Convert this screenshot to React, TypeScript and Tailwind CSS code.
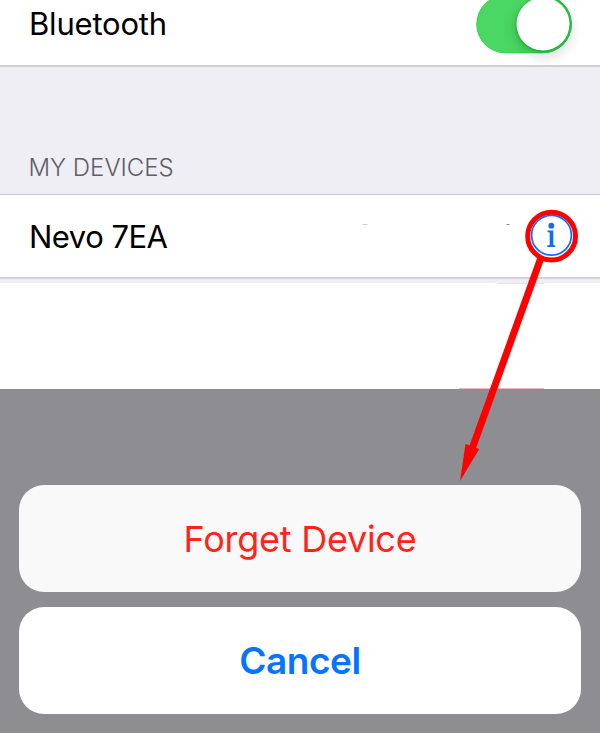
function Toggle() {
  return (
    <svg className="absolute right-0 top-0 h-[65px] w-[150px]" viewBox="450 0 150 65">
      <defs>
        <filter id="soft" x="-50%" y="-50%" width="200%" height="200%">
          <feGaussianBlur stdDeviation="6" />
        </filter>
        <filter id="edge" x="-50%" y="-50%" width="200%" height="200%">
          <feGaussianBlur stdDeviation="1" />
        </filter>
      </defs>
      <circle cx="545" cy="31" r="27" fill="#000" opacity="0.12" filter="url(#soft)" />
      <rect x="476.3" y="-5" width="95.500" height="58.300" rx="29.150" fill="#4bd763" />
      <clipPath id="track">
        <rect x="476.3" y="-5" width="95.500" height="58.300" rx="29.150" />
      </clipPath>
      <g clipPath="url(#track)">
        <rect x="476.8" y="-4.500" width="94.500" height="57.300" rx="28.650" fill="none" stroke="#38d553" strokeWidth="1" />
        <circle cx="541" cy="29" r="27" fill="#006010" opacity="0.22" filter="url(#soft)" />
        <circle cx="543.2" cy="24.800" r="27.300" fill="#0d9a2a" opacity="0.7" filter="url(#edge)" />
        <path d="M543 -4A28.200 28.200 0 0 1 543 52.500" fill="none" stroke="#1fc040" strokeWidth="2.200" />
      </g>
      <circle cx="543" cy="24" r="26.500" fill="#fff" />
    </svg>
  );
}

function Annotation() {
  return (
    <svg className="pointer-events-none absolute inset-0 h-[733px] w-[600px]" viewBox="0 0 600 733">
      <path d="M497 283.5H544" stroke="#f4dce3" strokeWidth="1" />
      <path d="M459 388.5H544" stroke="#f5b5b5" strokeWidth="1" />
      <path d="M362.5 224.5H367.5" stroke="#ccc" strokeWidth="1" />
      <path d="M506.5 224.5H509.5" stroke="#888" strokeWidth="1" />
      <path d="M540.5 259L472 449" stroke="#fe0000" strokeWidth="7" />
      <path d="M465.5 444L479.2 449L460 481Z" fill="#fe0000" />
      <circle cx="551.6" cy="236.2" r="23.9" fill="#fff" stroke="#fe0000" strokeWidth="5" />
      <circle cx="551.5" cy="235.3" r="19.900" fill="none" stroke="#0a6cff" strokeWidth="1.700" />
      <circle cx="551.3" cy="225.700" r="2.900" fill="#0a6cff" />
      <path d="M547.5 230.500H553.300V245L555.300 245.600V247H547.200V245.600L549.700 245V232.600L547.500 232.100Z" fill="#0a6cff" />
    </svg>
  );
}

export default function App() {
  return (
    <main className="relative flex h-[733px] w-[600px] flex-col overflow-hidden bg-white font-['Inter',sans-serif] text-black">
      <section className="relative h-[65px] shrink-0 pl-[29px]">
        <div className="pt-[4px] text-[31px] leading-[40px] tracking-[-0.2px]">Bluetooth</div>
        <Toggle />
      </section>
      <header className="flex h-[130px] shrink-0 items-end border-b border-t-2 border-b-[#c8c7cc] border-t-[#d0cfd4] bg-[#efeef5] pb-[11px] pl-[28.5px] text-[24px] font-light leading-[30px] text-[#5f5f65]">
        MY DEVICES
      </header>
      <section className="h-[88px] shrink-0 border-b-4 border-[#efeef5]">
        <div className="h-[84px] border-b-2 border-[#d2d2d8] pl-[29px] pt-[22px] text-[31px] leading-[40px] tracking-[-0.5px]">Nevo 7EA</div>
      </section>
      <div className="h-[106px] shrink-0" />
      <section className="flex h-[344px] shrink-0 flex-col gap-[15px] bg-[#8e8d92] px-[19px] pt-[96px]">
        <button className="flex h-[107px] w-full items-center justify-center rounded-[25px] bg-[#f9f9f9] pt-px text-[36px] tracking-[-0.25px] text-[#ff2419]">
          Forget Device
        </button>
        <button className="flex h-[107px] w-full items-center justify-center rounded-[25px] bg-white text-[37px] font-semibold tracking-[-0.5px] text-[#0575ff]">
          Cancel
        </button>
      </section>
      <Annotation />
    </main>
  );
}
